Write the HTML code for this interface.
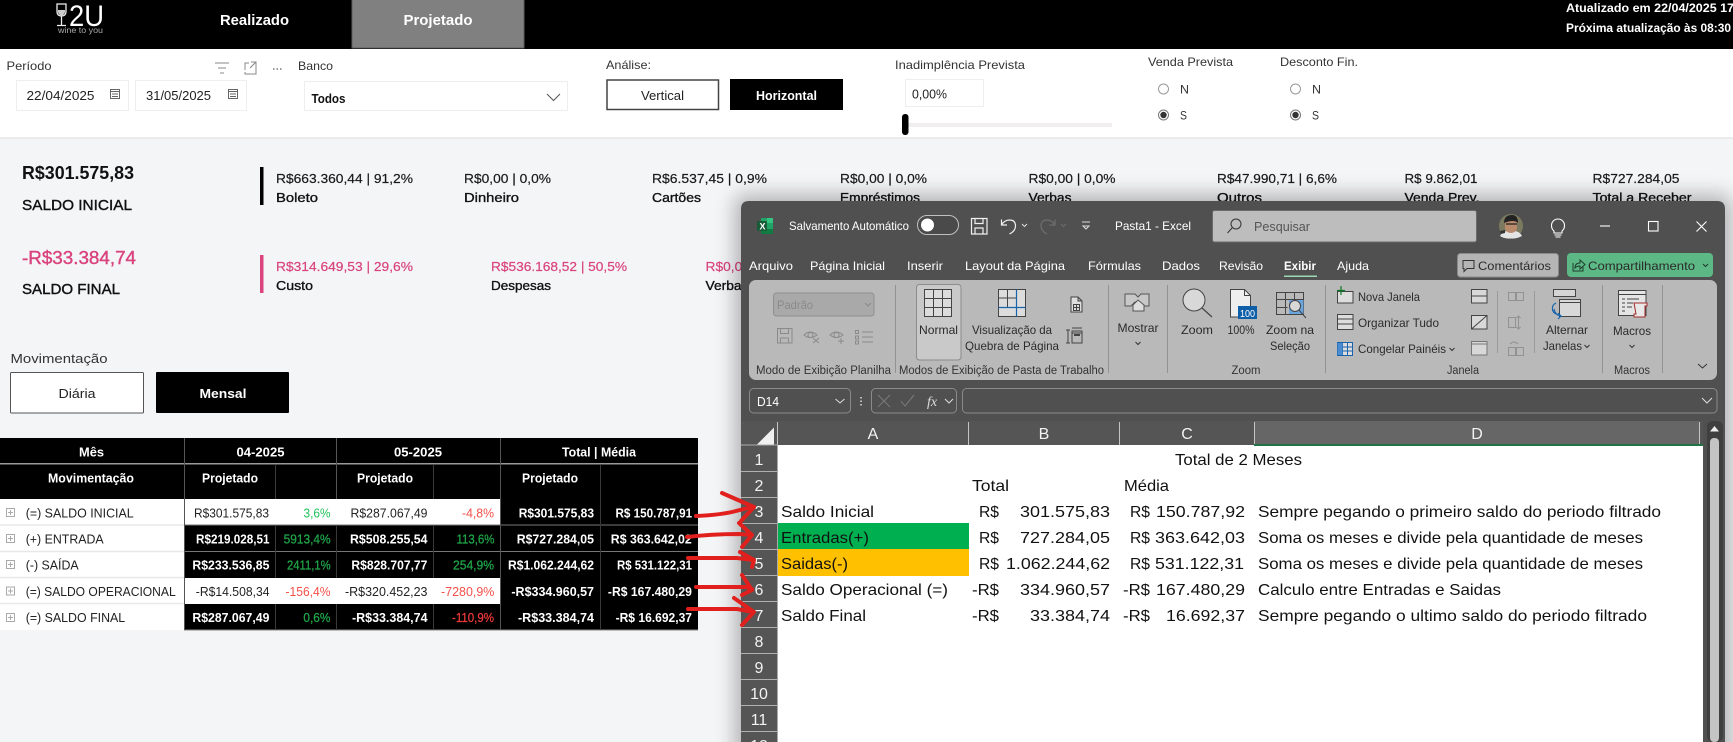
<!DOCTYPE html>
<html lang="pt-BR"><head><meta charset="utf-8"><title>Projetado</title>
<style>
html,body{margin:0;padding:0;width:1733px;height:742px;overflow:hidden;background:#f4f5f7}
svg{display:block}
text{font-family:"Liberation Sans",sans-serif;font-size:13px;fill:#222}
.w{fill:#fff}.b{font-weight:700}.d{fill:#222}
.lb{font-size:12px;fill:#333}
.kv{font-size:13px;fill:#1a1a1a;stroke:#1a1a1a;stroke-width:.2}
.kl{font-size:13px;fill:#111;stroke:#111;stroke-width:.35}
.p{fill:#d9437e;stroke:#d9437e}
.g{fill:#1fc25a}.g2{fill:#1fa84a;stroke:#1fa84a;stroke-width:.25}.r{fill:#f4504a}.r2{fill:#f23a3a;stroke:#f23a3a;stroke-width:.25}
.t{font-size:12px;fill:#fff}
.rb{font-size:12px;fill:#2b2b2b}
.gl{font-size:11.5px;fill:#333}
.c{font-size:16px;fill:#111}
.hd{font-size:16px;fill:#f2f2f2}
.ic{fill:none;stroke:#444;stroke-width:1}
.ici{fill:none;stroke:#8a8a8a;stroke-width:1}
</style></head><body>
<svg xmlns="http://www.w3.org/2000/svg" width="1733" height="742" viewBox="0 0 1733 742">
<defs><filter id="sh" x="-5%" y="-10%" width="110%" height="120%"><feGaussianBlur stdDeviation="10"/></filter></defs>
<rect width="1733" height="742" fill="#f4f5f7"/>

<!-- header -->
<rect width="1733" height="49" fill="#000"/>
<rect x="352" y="-1" width="172" height="49" fill="#808080" stroke="#5e5e5e"/>
<path d="M57 4h9v7q0 5-4.500 5t-4.500-5zM61.500 16v9M57 25.500h9" fill="none" stroke="#eee" stroke-width="1.300"/>
<path d="M58 10h7v2q-1 3.500-3.500 3.500T58 12z" fill="#ccc"/>
<text x="69" y="26" class="w" style="font-size:30px" textLength="35" lengthAdjust="spacingAndGlyphs">2U</text>
<text x="58" y="33" style="font-size:8.500px;fill:#aaa" textLength="45" lengthAdjust="spacingAndGlyphs">wine to you</text>
<text x="254.500" y="25" text-anchor="middle" class="w b" style="font-size:15px" textLength="69" lengthAdjust="spacingAndGlyphs">Realizado</text>
<text x="438" y="25" text-anchor="middle" class="w b" style="font-size:15px" textLength="69" lengthAdjust="spacingAndGlyphs">Projetado</text>
<text x="1566" y="12" class="w b" style="font-size:12px" textLength="168" lengthAdjust="spacingAndGlyphs">Atualizado em 22/04/2025 17</text>
<text x="1566" y="32" class="w b" style="font-size:12px" textLength="165" lengthAdjust="spacingAndGlyphs">Próxima atualização às 08:30</text>

<!-- filter bar -->
<rect y="49" width="1733" height="88" fill="#fff"/>
<rect y="137" width="1733" height="2" fill="#ebebeb"/>
<text x="6.500" y="70" class="lb" textLength="45" lengthAdjust="spacingAndGlyphs">Período</text>
<path d="M215 63h14M218 68h8M220 73h4" stroke="#888" fill="none"/>
<path d="M245 70v-7h4M251 62h5v12h-11v-2M250 68l6-6" stroke="#888" fill="none"/>
<path d="M273 69h1.500M276.500 69h1.500M280 69h1.500" stroke="#777" stroke-width="1.500" fill="none"/>
<text x="298" y="70" class="lb" textLength="35" lengthAdjust="spacingAndGlyphs">Banco</text>
<rect x="16.500" y="80.500" width="112" height="30" fill="#fff" stroke="#eee"/>
<rect x="135.500" y="80.500" width="111" height="30" fill="#fff" stroke="#eee"/>
<text x="26.500" y="100" class="d" textLength="68" lengthAdjust="spacingAndGlyphs">22/04/2025</text>
<text x="146" y="100" class="d" textLength="65" lengthAdjust="spacingAndGlyphs">31/05/2025</text>
<path d="M110.500 89.500h9v9h-9zM110.500 91.500h9M112 94h6M112 96.500h6" fill="none" stroke="#666"/>
<path d="M228.500 89.500h9v9h-9zM228.500 91.500h9M230 94h6M230 96.500h6" fill="none" stroke="#666"/>
<rect x="304.500" y="81.500" width="263" height="29" fill="#fff" stroke="#eee"/>
<text x="311.500" y="103" style="font-size:13px;fill:#111;font-weight:700" textLength="34" lengthAdjust="spacingAndGlyphs">Todos</text>
<path d="M547 94l6.500 6.500 6.500-6.500" fill="none" stroke="#555"/>
<text x="606" y="69" class="lb" textLength="45" lengthAdjust="spacingAndGlyphs">Análise:</text>
<rect x="607" y="80" width="111.500" height="29.500" fill="#fff" stroke="#444" stroke-width="1.500"/>
<text x="662.500" y="100" text-anchor="middle" class="d" textLength="43" lengthAdjust="spacingAndGlyphs">Vertical</text>
<rect x="730" y="79" width="113" height="31" fill="#000"/>
<text x="786.500" y="100" text-anchor="middle" class="w b" textLength="61" lengthAdjust="spacingAndGlyphs">Horizontal</text>
<text x="895" y="69" class="lb" textLength="130" lengthAdjust="spacingAndGlyphs">Inadimplência Prevista</text>
<rect x="905.500" y="79.500" width="78" height="27" fill="#fff" stroke="#eee"/>
<text x="912" y="98.500" class="d" textLength="35" lengthAdjust="spacingAndGlyphs">0,00%</text>
<rect x="905" y="123" width="207" height="4" fill="#f0eeee"/>
<rect x="902" y="114" width="6.500" height="21" rx="3" fill="#000"/>
<text x="1148" y="66" class="lb" textLength="85" lengthAdjust="spacingAndGlyphs">Venda Prevista</text>
<text x="1280" y="66" class="lb" textLength="78" lengthAdjust="spacingAndGlyphs">Desconto Fin.</text>
<circle cx="1163.500" cy="89" r="5" fill="#fff" stroke="#999"/>
<circle cx="1163.500" cy="115" r="5" fill="#fff" stroke="#777"/><circle cx="1163.500" cy="115" r="3.200" fill="#333"/>
<text x="1180" y="93.500" class="lb" textLength="9" lengthAdjust="spacingAndGlyphs">N</text>
<text x="1180" y="119.500" class="lb" textLength="7" lengthAdjust="spacingAndGlyphs">S</text>
<circle cx="1295.500" cy="89" r="5" fill="#fff" stroke="#999"/>
<circle cx="1295.500" cy="115" r="5" fill="#fff" stroke="#777"/><circle cx="1295.500" cy="115" r="3.200" fill="#333"/>
<text x="1312" y="93.500" class="lb" textLength="9" lengthAdjust="spacingAndGlyphs">N</text>
<text x="1312" y="119.500" class="lb" textLength="7" lengthAdjust="spacingAndGlyphs">S</text>

<!-- KPIs -->
<text x="22" y="179" style="font-size:18px;fill:#111;font-weight:700" textLength="112" lengthAdjust="spacingAndGlyphs">R$301.575,83</text>
<text x="22" y="210" style="font-size:15px;fill:#111;stroke:#111;stroke-width:.4" textLength="110" lengthAdjust="spacingAndGlyphs">SALDO INICIAL</text>
<text x="22" y="264" style="font-size:18px;fill:#d9437e;stroke:#d9437e;stroke-width:.4" textLength="114" lengthAdjust="spacingAndGlyphs">-R$33.384,74</text>
<text x="22" y="294" style="font-size:15px;fill:#111;stroke:#111;stroke-width:.4" textLength="98" lengthAdjust="spacingAndGlyphs">SALDO FINAL</text>
<rect x="260" y="167" width="3.500" height="38" fill="#000"/>
<rect x="260" y="255" width="3.500" height="38" fill="#d9437e"/>
<g>
<text x="276" y="183" class="kv" textLength="137" lengthAdjust="spacingAndGlyphs">R$663.360,44 | 91,2%</text><text x="276" y="202" class="kl" textLength="42" lengthAdjust="spacingAndGlyphs">Boleto</text>
<text x="464" y="183" class="kv" textLength="87" lengthAdjust="spacingAndGlyphs">R$0,00 | 0,0%</text><text x="464" y="202" class="kl" textLength="55" lengthAdjust="spacingAndGlyphs">Dinheiro</text>
<text x="652" y="183" class="kv" textLength="115" lengthAdjust="spacingAndGlyphs">R$6.537,45 | 0,9%</text><text x="652" y="202" class="kl" textLength="49" lengthAdjust="spacingAndGlyphs">Cartões</text>
<text x="840" y="183" class="kv" textLength="87" lengthAdjust="spacingAndGlyphs">R$0,00 | 0,0%</text><text x="840" y="202" class="kl" textLength="80" lengthAdjust="spacingAndGlyphs">Empréstimos</text>
<text x="1028.500" y="183" class="kv" textLength="87" lengthAdjust="spacingAndGlyphs">R$0,00 | 0,0%</text><text x="1028.500" y="202" class="kl" textLength="43" lengthAdjust="spacingAndGlyphs">Verbas</text>
<text x="1217" y="183" class="kv" textLength="120" lengthAdjust="spacingAndGlyphs">R$47.990,71 | 6,6%</text><text x="1217" y="202" class="kl" textLength="45" lengthAdjust="spacingAndGlyphs">Outros</text>
<text x="1404.500" y="183" class="kv" textLength="73" lengthAdjust="spacingAndGlyphs">R$ 9.862,01</text><text x="1404.500" y="202" class="kl" textLength="75" lengthAdjust="spacingAndGlyphs">Venda Prev.</text>
<text x="1592.500" y="183" class="kv" textLength="87" lengthAdjust="spacingAndGlyphs">R$727.284,05</text><text x="1592.500" y="202" class="kl" textLength="99" lengthAdjust="spacingAndGlyphs">Total a Receber</text>
<text x="276" y="271" class="kv p" textLength="137" lengthAdjust="spacingAndGlyphs">R$314.649,53 | 29,6%</text><text x="276" y="290" class="kl" textLength="37" lengthAdjust="spacingAndGlyphs">Custo</text>
<text x="491" y="271" class="kv p" textLength="136" lengthAdjust="spacingAndGlyphs">R$536.168,52 | 50,5%</text><text x="491" y="290" class="kl" textLength="60" lengthAdjust="spacingAndGlyphs">Despesas</text>
<text x="705.500" y="271" class="kv p" textLength="87" lengthAdjust="spacingAndGlyphs">R$0,00 | 0,0%</text><text x="705.500" y="290" class="kl" textLength="43" lengthAdjust="spacingAndGlyphs">Verbas</text>
</g>
<text x="10.500" y="363" style="font-size:13px;fill:#333" textLength="97" lengthAdjust="spacingAndGlyphs">Movimentação</text>
<rect x="10.500" y="372.500" width="133" height="40.500" rx="1" fill="#fff" stroke="#555"/>
<text x="77" y="398" text-anchor="middle" class="d" textLength="37" lengthAdjust="spacingAndGlyphs">Diária</text>
<rect x="156" y="372" width="133" height="41" rx="1" fill="#000"/>
<text x="223" y="398" text-anchor="middle" class="w b" textLength="47" lengthAdjust="spacingAndGlyphs">Mensal</text>

<!-- table -->
<rect y="438" width="698" height="25" fill="#000"/>
<rect y="463" width="698" height="1.500" fill="#999"/>
<rect y="464.500" width="698" height="34.500" fill="#000"/>
<rect y="499" width="184" height="131" fill="#fff"/>
<rect x="184" y="499" width="316" height="25.500" fill="#fff"/>
<rect x="500" y="499" width="198" height="25.500" fill="#000"/>
<rect x="184" y="525" width="514" height="26" fill="#000"/>
<rect x="184" y="551" width="514" height="27" fill="#000"/>
<rect x="184" y="578" width="316" height="26" fill="#fff"/>
<rect x="500" y="578" width="198" height="26" fill="#000"/>
<rect x="184" y="604" width="514" height="26" fill="#000"/>
<path d="M0 525h184M0 551.500h184M0 577.500h184M0 603.500h184" stroke="#e8e8e8" stroke-width="1.500"/>
<path d="M184 525h514M184 551.500h514" stroke="#777"/>
<path d="M184 630h514" stroke="#888"/>
<path d="M184.500 438v192M336.500 438v61M500.500 438v192" stroke="#555"/>
<path d="M275.500 465v34M433.500 465v34M600.500 465v34M275.500 525v53M275.500 604v26M433.500 525v53M433.500 604v26M600.500 499v131M336.500 525v53M336.500 604v26" stroke="#3a3a3a"/>
<g style="font-weight:700">
<text x="91.500" y="456.500" text-anchor="middle" class="w b" textLength="25" lengthAdjust="spacingAndGlyphs">Mês</text>
<text x="260.500" y="456.500" text-anchor="middle" class="w b" textLength="48" lengthAdjust="spacingAndGlyphs">04-2025</text>
<text x="418" y="456.500" text-anchor="middle" class="w b" textLength="48" lengthAdjust="spacingAndGlyphs">05-2025</text>
<text x="599" y="456.500" text-anchor="middle" class="w b" textLength="74" lengthAdjust="spacingAndGlyphs">Total | Média</text>
<text x="91" y="482.500" text-anchor="middle" class="w b" textLength="86" lengthAdjust="spacingAndGlyphs">Movimentação</text>
<text x="230" y="482.500" text-anchor="middle" class="w b" textLength="56" lengthAdjust="spacingAndGlyphs">Projetado</text>
<text x="385" y="482.500" text-anchor="middle" class="w b" textLength="56" lengthAdjust="spacingAndGlyphs">Projetado</text>
<text x="550" y="482.500" text-anchor="middle" class="w b" textLength="56" lengthAdjust="spacingAndGlyphs">Projetado</text>
</g>
<g fill="none" stroke="#aaa"><path d="M6.500 508.500h8v8h-8zM10.500 510v5M8 512.500h5M6.500 534.500h8v8h-8zM10.500 536v5M8 538.500h5M6.500 560.500h8v8h-8zM10.500 562v5M8 564.500h5M6.500 587h8v8h-8zM10.500 588.500v5M8 591h5M6.500 613.500h8v8h-8zM10.500 615v5M8 617.500h5"/></g>
<text x="25.700" y="517.500" class="d" textLength="108" lengthAdjust="spacingAndGlyphs">(=) SALDO INICIAL</text>
<text x="25.700" y="543.500" class="d" textLength="78" lengthAdjust="spacingAndGlyphs">(+) ENTRADA</text>
<text x="25.700" y="569.500" class="d" textLength="53" lengthAdjust="spacingAndGlyphs">(-) SAÍDA</text>
<text x="25.700" y="596" class="d" textLength="150" lengthAdjust="spacingAndGlyphs">(=) SALDO OPERACIONAL</text>
<text x="25.700" y="622" class="d" textLength="99.500" lengthAdjust="spacingAndGlyphs">(=) SALDO FINAL</text>
<!-- row1 -->
<text x="194" y="517.500" class="d" textLength="75" lengthAdjust="spacingAndGlyphs">R$301.575,83</text>
<text x="303.500" y="517.500" class="g" textLength="27" lengthAdjust="spacingAndGlyphs">3,6%</text>
<text x="350.500" y="517.500" class="d" textLength="77" lengthAdjust="spacingAndGlyphs">R$287.067,49</text>
<text x="462" y="517.500" class="r" textLength="32" lengthAdjust="spacingAndGlyphs">-4,8%</text>
<text x="518.700" y="517.500" class="w b" textLength="75.300" lengthAdjust="spacingAndGlyphs">R$301.575,83</text>
<text x="615.500" y="517.500" class="w b" textLength="76.600" lengthAdjust="spacingAndGlyphs">R$ 150.787,91</text>
<!-- row2 -->
<text x="196" y="543.500" class="w b" textLength="73.500" lengthAdjust="spacingAndGlyphs">R$219.028,51</text>
<text x="283.600" y="543.500" class="g2" textLength="47" lengthAdjust="spacingAndGlyphs">5913,4%</text>
<text x="350" y="543.500" class="w b" textLength="77.500" lengthAdjust="spacingAndGlyphs">R$508.255,54</text>
<text x="456.500" y="543.500" class="g2" textLength="38" lengthAdjust="spacingAndGlyphs">113,6%</text>
<text x="516.700" y="543.500" class="w b" textLength="77.300" lengthAdjust="spacingAndGlyphs">R$727.284,05</text>
<text x="610.800" y="543.500" class="w b" textLength="81" lengthAdjust="spacingAndGlyphs">R$ 363.642,02</text>
<!-- row3 -->
<text x="192.400" y="569.500" class="w b" textLength="77" lengthAdjust="spacingAndGlyphs">R$233.536,85</text>
<text x="287" y="569.500" class="g2" textLength="43.600" lengthAdjust="spacingAndGlyphs">2411,1%</text>
<text x="351.400" y="569.500" class="w b" textLength="76" lengthAdjust="spacingAndGlyphs">R$828.707,77</text>
<text x="453" y="569.500" class="g2" textLength="41" lengthAdjust="spacingAndGlyphs">254,9%</text>
<text x="508" y="569.500" class="w b" textLength="86" lengthAdjust="spacingAndGlyphs">R$1.062.244,62</text>
<text x="617" y="569.500" class="w b" textLength="75" lengthAdjust="spacingAndGlyphs">R$ 531.122,31</text>
<!-- row4 -->
<text x="195.800" y="596" class="d" textLength="73.700" lengthAdjust="spacingAndGlyphs">-R$14.508,34</text>
<text x="285.500" y="596" class="r" textLength="45" lengthAdjust="spacingAndGlyphs">-156,4%</text>
<text x="345" y="596" class="d" textLength="82.500" lengthAdjust="spacingAndGlyphs">-R$320.452,23</text>
<text x="441" y="596" class="r" textLength="53.400" lengthAdjust="spacingAndGlyphs">-7280,9%</text>
<text x="511.400" y="596" class="w b" textLength="82.600" lengthAdjust="spacingAndGlyphs">-R$334.960,57</text>
<text x="607.900" y="596" class="w b" textLength="84" lengthAdjust="spacingAndGlyphs">-R$ 167.480,29</text>
<!-- row5 -->
<text x="192.400" y="622" class="w b" textLength="77" lengthAdjust="spacingAndGlyphs">R$287.067,49</text>
<text x="303.400" y="622" class="g2" textLength="27" lengthAdjust="spacingAndGlyphs">0,6%</text>
<text x="352" y="622" class="w b" textLength="75.500" lengthAdjust="spacingAndGlyphs">-R$33.384,74</text>
<text x="452" y="622" class="r2" textLength="42" lengthAdjust="spacingAndGlyphs">-110,9%</text>
<text x="518" y="622" class="w b" textLength="76" lengthAdjust="spacingAndGlyphs">-R$33.384,74</text>
<text x="615.600" y="622" class="w b" textLength="76.400" lengthAdjust="spacingAndGlyphs">-R$ 16.692,37</text>

<!-- excel window -->
<rect x="735" y="195" width="996" height="570" rx="8" fill="#000" opacity=".28" filter="url(#sh)"/>
<path d="M741 742V209q0-8 8-8h968q8 0 8 8v533z" fill="#505050"/>
<!-- title bar -->
<path d="M761 218h12v16h-12z" fill="#21a366"/><path d="M767 218h6v5h-6z" fill="#33c481"/><path d="M761 229h12v5h-12z" fill="#107c41"/>
<rect x="757" y="221" width="10" height="10" rx="1" fill="#185c37"/>
<text x="759.500" y="229.500" class="w b" style="font-size:9px">X</text>
<text x="789" y="230" class="t" textLength="120" lengthAdjust="spacingAndGlyphs">Salvamento Automático</text>
<rect x="917.500" y="215.500" width="41" height="19" rx="9.500" fill="#4a4a4a" stroke="#c0c0c0"/>
<circle cx="927.500" cy="225" r="6.500" fill="#fff"/>
<path d="M971.500 218.500h15.500v15.500h-15.500zM975 218.500v5h8v-5M975 234v-6h8v6" fill="none" stroke="#f0f0f0" stroke-width="1.200"/>
<path d="M1001.500 219.500v5.500h5.500M1001.500 225q3-5 8-5 6 0 6 6 0 5-6 8" fill="none" stroke="#f0f0f0" stroke-width="1.200"/>
<path d="M1022 224l2.500 2.500 2.500-2.500" fill="none" stroke="#ddd"/>
<path d="M1055 219.500v5.500h-5.500M1055 225q-3-5-8-5-6 0-6 6 0 5 6 8" fill="none" stroke="#6e6e6e" stroke-width="1.200"/>
<path d="M1061 224l2.500 2.500 2.500-2.500" fill="none" stroke="#6e6e6e"/>
<path d="M1082 222h8M1083 226h6l-3 3z" fill="none" stroke="#ddd"/>
<text x="1115" y="230" class="t" textLength="76" lengthAdjust="spacingAndGlyphs">Pasta1  -  Excel</text>
<rect x="1212.500" y="210.500" width="264" height="31.500" rx="2" fill="#bdbdbd" stroke="#6a6a6a"/>
<circle cx="1236" cy="224" r="5" fill="none" stroke="#333"/><path d="M1232 228l-4.500 5" stroke="#333"/>
<text x="1254" y="231" style="font-size:13px;fill:#555" textLength="56" lengthAdjust="spacingAndGlyphs">Pesquisar</text>
<circle cx="1511" cy="226" r="12" fill="#7b7a60"/>
<path d="M1500 236q3-6 11-5 8-1 11 5-5 3-11 2.500-7 .5-11-2.500z" fill="#e4e4e4"/>
<path d="M1505 219q6-5 12 0v10q-2 4-6 4t-6-4z" fill="#b98a6b"/>
<path d="M1504 223q0-8 8-8 6 0 6 8-4-4-14 0z" fill="#222"/>
<path d="M1506 224h4M1513 224h4M1510 224h3" stroke="#222" stroke-width="1.200"/>
<path d="M1500 231l5-1v3l-4 1z" fill="#333"/>
<path d="M1554 231q-2.500-2-2.500-5.500a6.500 6.500 0 0 1 13 0q0 3.500-2.500 5.500v2h-8zM1554.500 235h7M1555.500 237h5" fill="none" stroke="#fff" stroke-width="1.100"/>
<path d="M1600 226h10" stroke="#fff" stroke-width="1.100"/>
<rect x="1648.500" y="221.500" width="9.500" height="9.500" fill="none" stroke="#fff" stroke-width="1.100"/>
<path d="M1696.500 221.500l10 10M1706.500 221.500l-10 10" stroke="#fff" stroke-width="1.100"/>
<!-- tabs -->
<g>
<text x="749" y="270" class="t" textLength="44" lengthAdjust="spacingAndGlyphs">Arquivo</text>
<text x="810" y="270" class="t" textLength="75" lengthAdjust="spacingAndGlyphs">Página Inicial</text>
<text x="907" y="270" class="t" textLength="36" lengthAdjust="spacingAndGlyphs">Inserir</text>
<text x="965" y="270" class="t" textLength="100" lengthAdjust="spacingAndGlyphs">Layout da Página</text>
<text x="1088" y="270" class="t" textLength="53" lengthAdjust="spacingAndGlyphs">Fórmulas</text>
<text x="1162" y="270" class="t" textLength="38" lengthAdjust="spacingAndGlyphs">Dados</text>
<text x="1219" y="270" class="t" textLength="44" lengthAdjust="spacingAndGlyphs">Revisão</text>
<text x="1284" y="270" class="t b" textLength="32" lengthAdjust="spacingAndGlyphs">Exibir</text>
<text x="1337" y="270" class="t" textLength="32" lengthAdjust="spacingAndGlyphs">Ajuda</text>
</g>
<rect x="1284" y="275.500" width="33" height="1.500" fill="#9ed9b3"/>
<rect x="1457.500" y="253.500" width="101" height="23.500" rx="3" fill="#b5b5b5" stroke="#8a8a8a"/>
<path d="M1463 260.500h11v8h-7l-3 3v-3h-1z" fill="none" stroke="#333"/>
<text x="1478" y="270" class="rb" textLength="73" lengthAdjust="spacingAndGlyphs">Comentários</text>
<rect x="1567" y="253" width="146" height="24" rx="4" fill="#5cb885"/>
<path d="M1573 263v8h10v-4M1575 268q0-5 5-5v-3l5 4.500-5 4.500v-3q-3 0-5 2z" fill="none" stroke="#1f3a2b"/>
<text x="1588" y="270" class="rb" textLength="107" lengthAdjust="spacingAndGlyphs">Compartilhamento</text>
<path d="M1703 264l2.500 2.500 2.500-2.500" fill="none" stroke="#1f3a2b"/>
<!-- ribbon -->
<rect x="749" y="280" width="968" height="100" rx="7" fill="#b9b9b9"/>
<path d="M895.500 285v88M1108.500 285v88M1167.500 285v88M1325.500 285v88M1602.500 285v88M1662.500 285v88" stroke="#929292"/>
<path d="M1497.500 291v62M1534.500 291v62" stroke="#999"/>
<text x="756" y="374" class="gl" textLength="135" lengthAdjust="spacingAndGlyphs">Modo de Exibição Planilha</text>
<text x="899" y="374" class="gl" textLength="205" lengthAdjust="spacingAndGlyphs">Modos de Exibição de Pasta de Trabalho</text>
<text x="1246" y="374" class="gl" text-anchor="middle" textLength="29" lengthAdjust="spacingAndGlyphs">Zoom</text>
<text x="1463" y="374" class="gl" text-anchor="middle" textLength="32" lengthAdjust="spacingAndGlyphs">Janela</text>
<text x="1632" y="374" class="gl" text-anchor="middle" textLength="36" lengthAdjust="spacingAndGlyphs">Macros</text>
<rect x="773.500" y="293" width="100.500" height="23" rx="3" fill="#a9a9a9" stroke="#8f8f8f"/>
<text x="777" y="309" style="font-size:12px;fill:#8a8a8a" textLength="36" lengthAdjust="spacingAndGlyphs">Padrão</text>
<path d="M865 303l3 3 3-3" fill="none" stroke="#8a8a8a"/>
<path d="M777.500 328.500h14.500v14.500h-14.500zM780.500 328.500v5h8v-5M780.500 343v-5h8v5" class="ici"/>
<path d="M804 335q6-6 13 0-7 5-13 0zM808 335a2.500 2.500 0 1 0 5 0 2.500 2.500 0 1 0-5 0M813 338l6 5M819 338l-6 5" class="ici"/>
<path d="M830 335q6-6 13 0-7 5-13 0zM834 335a2.500 2.500 0 1 0 5 0 2.500 2.500 0 1 0-5 0M841 338v6M838 341h6" class="ici"/>
<path d="M855.500 330.500h3v3h-3zM855.500 336h3v3h-3zM855.500 341h3v3h-3zM862 332h11M862 337h11M862 342h11" class="ici"/>
<rect x="916.500" y="284.500" width="44.500" height="75.500" rx="3" fill="#c9c9c9" stroke="#8c8c8c"/>
<path d="M924.500 289.500h27v27h-27zM924.500 298.500h27M924.500 307.500h27M933.500 289.500v27M942.500 289.500v27" fill="#dcdcdc" stroke="#444"/>
<text x="938.500" y="334" class="rb" text-anchor="middle" textLength="39" lengthAdjust="spacingAndGlyphs">Normal</text>
<rect x="998.500" y="289.500" width="27" height="27" fill="#dcdcdc" stroke="#444"/>
<path d="M998.500 298h18M1007.500 289.500v18" stroke="#444" fill="none"/>
<path d="M998.500 307.500h27M1016.500 289.500v27" stroke="#1764ad" stroke-width="1.200" fill="none"/>
<text x="1012" y="334" class="rb" text-anchor="middle" textLength="80" lengthAdjust="spacingAndGlyphs">Visualização da</text>
<text x="1012" y="350" class="rb" text-anchor="middle" textLength="94" lengthAdjust="spacingAndGlyphs">Quebra de Página</text>
<path d="M1071 297h7l4 4v11h-11zM1078 297v4h4M1073.500 304.500h6v6h-6zM1076.500 304.500v6M1073.500 307.500h6" fill="#dedede" stroke="#444"/>
<path d="M1068 330v13M1066 330h4M1066 343h4M1072 331h10v12h-10zM1072 328h10M1072 333h10" fill="none" stroke="#444"/>
<rect x="1074" y="334" width="6" height="2" fill="#444"/>
<path d="M1125 294h10l3 3 3-3h8v12h-10l-4-4-4 4h-6z" fill="#c8c8c8" stroke="#555"/>
<path d="M1133 305l5-5 6 5v6h-11z" fill="#ddd" stroke="#555"/>
<text x="1138" y="332" class="rb" text-anchor="middle" textLength="41" lengthAdjust="spacingAndGlyphs">Mostrar</text>
<path d="M1135.500 342l2.500 2.500 2.500-2.500" fill="none" stroke="#333"/>
<circle cx="1194" cy="300" r="11" fill="#d8d8d8" stroke="#444"/>
<path d="M1202 308l10 9" stroke="#444" stroke-width="1.200"/>
<text x="1197" y="334" class="rb" text-anchor="middle" textLength="32" lengthAdjust="spacingAndGlyphs">Zoom</text>
<path d="M1230.500 289.500h14l6 6v21.500h-20z" fill="#eee" stroke="#444"/>
<path d="M1244.500 289.500v6h6" fill="none" stroke="#444"/>
<rect x="1238" y="306" width="19" height="13" fill="#0f5ea8"/>
<text x="1247.500" y="317" class="w" text-anchor="middle" style="font-size:10.500px" textLength="15" lengthAdjust="spacingAndGlyphs">100</text>
<text x="1241" y="334" class="rb" text-anchor="middle" textLength="27" lengthAdjust="spacingAndGlyphs">100%</text>
<path d="M1276.500 292.500h27v22h-27zM1276.500 299.500h27M1276.500 307.500h11M1285.500 292.500v22M1294.500 292.500v7" fill="none" stroke="#444"/>
<rect x="1289" y="300" width="14.500" height="14" fill="#6ba5de"/>
<circle cx="1295" cy="306" r="5.500" fill="#d8d8d8" stroke="#444"/><path d="M1299 310l7 8" stroke="#444"/>
<text x="1290" y="334" class="rb" text-anchor="middle" textLength="48" lengthAdjust="spacingAndGlyphs">Zoom na</text>
<text x="1290" y="350" class="rb" text-anchor="middle" textLength="40" lengthAdjust="spacingAndGlyphs">Seleção</text>
<path d="M1337.500 291.500h15.500v11.500h-15.500zM1344 291.500h9" fill="#ddd" stroke="#444"/>
<path d="M1341 286v9M1337 290.500h8" stroke="#0a7a26" stroke-width="1.200"/>
<path d="M1337.500 314.500h15.500v15h-15.500zM1337.500 319h15.500M1337.500 324h15.500" fill="#ddd" stroke="#444"/>
<path d="M1337.500 342.500h15v13h-15zM1337.500 347h15M1337.500 351h15M1342.500 342.500v13M1347.500 342.500v13" fill="#ddd" stroke="#1764ad"/>
<path d="M1337.500 343h5v12h-5z" fill="#4b8bd0"/>
<text x="1358" y="301" class="rb" textLength="62" lengthAdjust="spacingAndGlyphs">Nova Janela</text>
<text x="1358" y="327" class="rb" textLength="81" lengthAdjust="spacingAndGlyphs">Organizar Tudo</text>
<text x="1358" y="353" class="rb" textLength="88" lengthAdjust="spacingAndGlyphs">Congelar Painéis</text>
<path d="M1449.500 348l2.500 2.500 2.500-2.500" fill="none" stroke="#333"/>
<path d="M1471.500 289.500h15.500v13.500h-15.500zM1471.500 296h15.500" fill="#d8d8d8" stroke="#444"/>
<path d="M1471.500 315.500h15.500v13.500h-15.500zM1471.500 329l15.500-13.500" fill="#d8d8d8" stroke="#444"/>
<path d="M1471.500 341.500h15.500v13.500h-15.500zM1471.500 344h15.500" fill="#d8d8d8" stroke="#777"/>
<path d="M1508.500 292.500h7v8h-7zM1516.500 292.500h7v8h-7zM1508.500 317.500h7v10h-7zM1518.500 316v13M1516.500 318l2-2 2 2M1516.500 327l2 2 2-2M1508.500 347.500h7v8h-7zM1516.500 347.500h7v8h-7zM1510 344q4-4 8 0" fill="none" stroke="#929292"/>
<path d="M1553.500 289.500h22v7h-22z" fill="#d5d5d5" stroke="#444"/>
<path d="M1559.500 299.500h21v17h-21zM1559.500 302.500h21" fill="#d8d8d8" stroke="#444"/>
<path d="M1556 303a6 6 0 0 0 0 11M1554 309q1 6 7 7l-3-3M1561 316l-3 3" fill="none" stroke="#1764ad" stroke-width="1.200"/>
<text x="1567" y="334" class="rb" text-anchor="middle" textLength="42" lengthAdjust="spacingAndGlyphs">Alternar</text>
<text x="1543" y="350" class="rb" textLength="39" lengthAdjust="spacingAndGlyphs">Janelas</text>
<path d="M1584.500 345l2.500 2.500 2.500-2.500" fill="none" stroke="#333"/>
<path d="M1618.500 290.500h27.500v25h-27.500zM1618.500 294.500h27.500" fill="#e5e5e5" stroke="#444"/>
<path d="M1622 299h3M1627 299h12M1622 303h3M1627 303h6M1622 307h3M1627 307h5M1622 311h3" stroke="#444"/>
<path d="M1634 303h13v3h-2v11h-11v-3h2z" fill="#e8e8e8" stroke="#a52a2a"/>
<text x="1632" y="335" class="rb" text-anchor="middle" textLength="38" lengthAdjust="spacingAndGlyphs">Macros</text>
<path d="M1629.500 345l2.500 2.500 2.500-2.500" fill="none" stroke="#333"/>
<path d="M1698 364l4.500 4 4.500-4" fill="none" stroke="#333"/>
<!-- formula bar -->
<rect x="749.500" y="388.500" width="101" height="24.500" rx="4" fill="none" stroke="#8a8a8a"/>
<text x="757" y="406" class="t" style="font-size:12.500px" textLength="22" lengthAdjust="spacingAndGlyphs">D14</text>
<path d="M835.500 399l4.500 4 4.500-4" fill="none" stroke="#ddd"/>
<path d="M861 397v1.500M861 400.500v1.500M861 404v1.500" stroke="#ddd" stroke-width="1.500"/>
<rect x="871.500" y="388.500" width="85" height="24.500" rx="4" fill="none" stroke="#8a8a8a"/>
<path d="M878 395l12 12M890 395l-12 12" stroke="#7a7a7a"/>
<path d="M901 401l4 5 9-11" fill="none" stroke="#7a7a7a"/>
<text x="927" y="406" style="font-size:14px;fill:#ddd;font-style:italic;font-family:'Liberation Serif',serif">fx</text>
<path d="M945 399l4 4 4-4" fill="none" stroke="#ddd"/>
<rect x="962.500" y="388.500" width="754.500" height="24.500" rx="4" fill="none" stroke="#8a8a8a"/>
<path d="M1702 398l5 5 5-5" fill="none" stroke="#ddd"/>
<!-- grid -->
<rect x="741" y="421" width="962" height="25" fill="#555"/>
<rect x="1254" y="421" width="445" height="24" fill="#666"/>
<path d="M757 444.500l17-17v17z" fill="#f0f0f0"/>
<path d="M777.500 422v23M968.500 422v23M1119.500 422v23M1254.500 422v23M1699.500 422v23" stroke="#c4c4c4"/>
<rect x="778" y="445" width="925" height="297" fill="#fff"/>
<rect x="741" y="445" width="37" height="297" fill="#555"/>
<path d="M741 445h37" stroke="#aaa"/>
<rect x="1254" y="444" width="449" height="2" fill="#217346"/>
<path d="M741 471.500h37M741 497.500h37M741 523.500h37M741 549.500h37M741 575.500h37M741 601.500h37M741 627.500h37M741 653.500h37M741 679.500h37M741 705.500h37M741 731.500h37" stroke="#b0b0b0"/>
<path d="M777.500 445v297" stroke="#aaa"/>
<g class="hd">
<text x="873" y="439" class="hd" text-anchor="middle">A</text>
<text x="1044" y="439" class="hd" text-anchor="middle">B</text>
<text x="1187" y="439" class="hd" text-anchor="middle">C</text>
<text x="1477" y="439" class="hd" text-anchor="middle">D</text>
<text x="759" y="465" class="hd" text-anchor="middle">1</text>
<text x="759" y="491" class="hd" text-anchor="middle">2</text>
<text x="759" y="517" class="hd" text-anchor="middle">3</text>
<text x="759" y="543" class="hd" text-anchor="middle">4</text>
<text x="759" y="569" class="hd" text-anchor="middle">5</text>
<text x="759" y="595" class="hd" text-anchor="middle">6</text>
<text x="759" y="621" class="hd" text-anchor="middle">7</text>
<text x="759" y="647" class="hd" text-anchor="middle">8</text>
<text x="759" y="673" class="hd" text-anchor="middle">9</text>
<text x="759" y="699" class="hd" text-anchor="middle">10</text>
<text x="759" y="725" class="hd" text-anchor="middle">11</text>
<text x="759" y="751" class="hd" text-anchor="middle">12</text>
</g>
<rect x="778" y="523" width="191" height="26" fill="#00b050"/>
<rect x="778" y="549" width="191" height="27" fill="#ffc000"/>
<text x="1175" y="465" class="c" textLength="127" lengthAdjust="spacingAndGlyphs">Total de 2 Meses</text>
<text x="972" y="491" class="c" textLength="37" lengthAdjust="spacingAndGlyphs">Total</text>
<text x="1124" y="491" class="c" textLength="45" lengthAdjust="spacingAndGlyphs">Média</text>
<text x="781" y="517" class="c" textLength="93" lengthAdjust="spacingAndGlyphs">Saldo Inicial</text>
<text x="781" y="543" class="c" textLength="88" lengthAdjust="spacingAndGlyphs">Entradas(+)</text>
<text x="781" y="569" class="c" textLength="67" lengthAdjust="spacingAndGlyphs">Saidas(-)</text>
<text x="781" y="595" class="c" textLength="167" lengthAdjust="spacingAndGlyphs">Saldo Operacional (=)</text>
<text x="781" y="621" class="c" textLength="85" lengthAdjust="spacingAndGlyphs">Saldo Final</text>
<text x="979" y="517" class="c" textLength="20" lengthAdjust="spacingAndGlyphs">R$</text>
<text x="979" y="543" class="c" textLength="20" lengthAdjust="spacingAndGlyphs">R$</text>
<text x="979" y="569" class="c" textLength="20" lengthAdjust="spacingAndGlyphs">R$</text>
<text x="972" y="595" class="c" textLength="27" lengthAdjust="spacingAndGlyphs">-R$</text>
<text x="972" y="621" class="c" textLength="27" lengthAdjust="spacingAndGlyphs">-R$</text>
<text x="1020" y="517" class="c" textLength="90" lengthAdjust="spacingAndGlyphs">301.575,83</text>
<text x="1020" y="543" class="c" textLength="90" lengthAdjust="spacingAndGlyphs">727.284,05</text>
<text x="1006" y="569" class="c" textLength="104" lengthAdjust="spacingAndGlyphs">1.062.244,62</text>
<text x="1020" y="595" class="c" textLength="90" lengthAdjust="spacingAndGlyphs">334.960,57</text>
<text x="1030" y="621" class="c" textLength="80" lengthAdjust="spacingAndGlyphs">33.384,74</text>
<text x="1130" y="517" class="c" textLength="20" lengthAdjust="spacingAndGlyphs">R$</text>
<text x="1130" y="543" class="c" textLength="20" lengthAdjust="spacingAndGlyphs">R$</text>
<text x="1130" y="569" class="c" textLength="20" lengthAdjust="spacingAndGlyphs">R$</text>
<text x="1123" y="595" class="c" textLength="27" lengthAdjust="spacingAndGlyphs">-R$</text>
<text x="1123" y="621" class="c" textLength="27" lengthAdjust="spacingAndGlyphs">-R$</text>
<text x="1156" y="517" class="c" textLength="89" lengthAdjust="spacingAndGlyphs">150.787,92</text>
<text x="1155" y="543" class="c" textLength="90" lengthAdjust="spacingAndGlyphs">363.642,03</text>
<text x="1155" y="569" class="c" textLength="89" lengthAdjust="spacingAndGlyphs">531.122,31</text>
<text x="1156" y="595" class="c" textLength="89" lengthAdjust="spacingAndGlyphs">167.480,29</text>
<text x="1166" y="621" class="c" textLength="79" lengthAdjust="spacingAndGlyphs">16.692,37</text>
<text x="1258" y="517" class="c" textLength="403" lengthAdjust="spacingAndGlyphs">Sempre pegando o primeiro saldo do periodo filtrado</text>
<text x="1258" y="543" class="c" textLength="385" lengthAdjust="spacingAndGlyphs">Soma os meses e divide pela quantidade de meses</text>
<text x="1258" y="569" class="c" textLength="385" lengthAdjust="spacingAndGlyphs">Soma os meses e divide pela quantidade de meses</text>
<text x="1258" y="595" class="c" textLength="243" lengthAdjust="spacingAndGlyphs">Calculo entre Entradas e Saidas</text>
<text x="1258" y="621" class="c" textLength="389" lengthAdjust="spacingAndGlyphs">Sempre pegando o ultimo saldo do periodo filtrado</text>
<!-- scrollbar -->
<rect x="1707" y="421" width="16" height="321" rx="6" fill="#3f3f3f"/>
<rect x="1710" y="438" width="9" height="304" rx="4" fill="#c4c4c4"/>
<path d="M1714.500 426l4.500 5.500h-9z" fill="#eee"/>
<!-- red arrows -->
<g fill="none" stroke="#e1201d" stroke-width="4" stroke-linecap="round" stroke-linejoin="round">
<path d="M696 516q25-1 40-5t18-4"/><path d="M722 493l32 14-13 14"/>
<path d="M687 537q25-3 52-3l13 1"/><path d="M739 523l13 12-10 12"/>
<path d="M688 558h49l16 2"/><path d="M740 552l14 8-2 7"/>
<path d="M696 587h50l6 2"/><path d="M742 575l10 15-10 5"/>
<path d="M688 609h49l16 3"/><path d="M734 598l20 14-12 13"/>
</g>
</svg>
</body></html>
